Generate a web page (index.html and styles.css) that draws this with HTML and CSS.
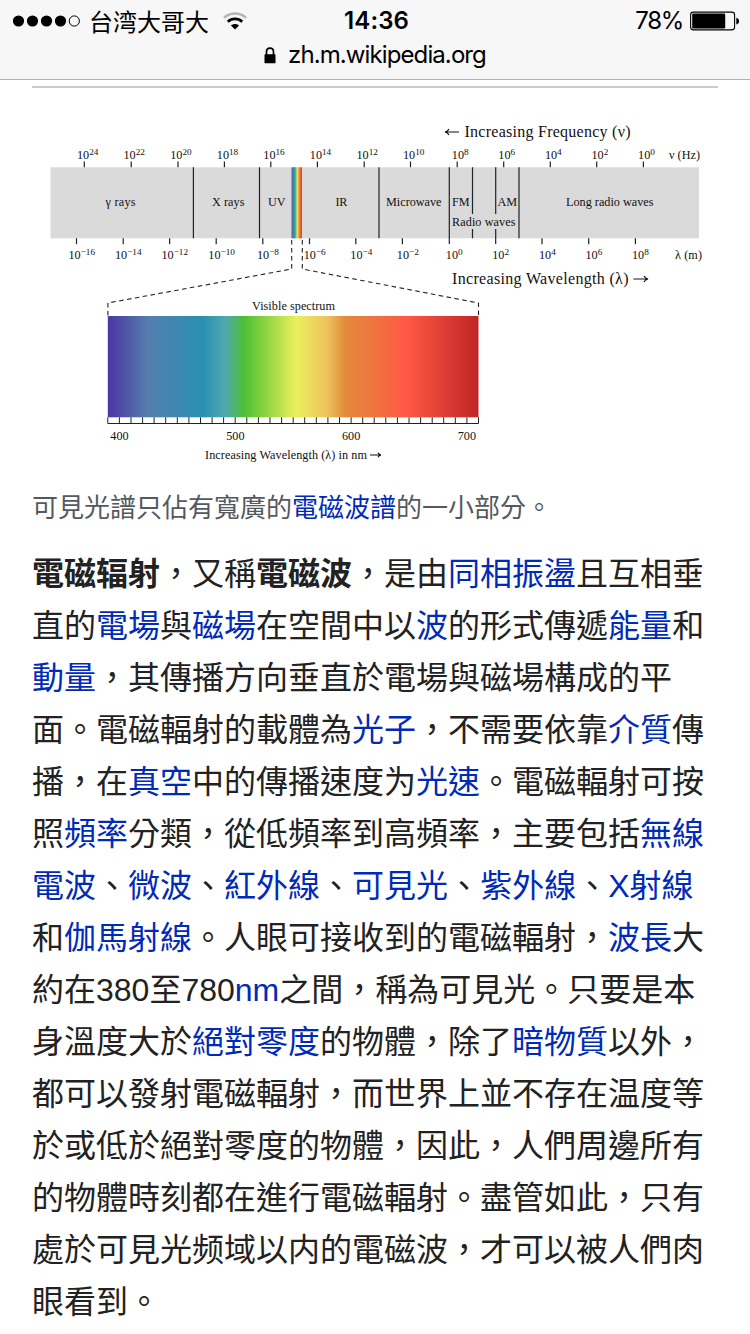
FILE: index.html
```html
<!DOCTYPE html>
<html lang="zh-Hant">
<head>
<meta charset="utf-8">
<title>電磁辐射</title>
<link rel="stylesheet" href="styles.css">
</head>
<body>
<header class="browser-bar">
  <div class="status">
    <div class="status-left">
      <svg class="signal" width="68" height="14" viewBox="0 0 68 14"><circle cx="6.500" cy="7" r="5.600"/><circle cx="20.500" cy="7" r="5.600"/><circle cx="34.500" cy="7" r="5.600"/><circle cx="48.500" cy="7" r="5.600"/><circle cx="62.300" cy="7" r="5.100" fill="none" stroke="#000" stroke-width="1"/></svg>
      <span class="carrier" lang="zh-Hans">台湾大哥大</span>
      <svg class="wifi" width="24" height="18" viewBox="0 0 24 18"><path d="M1 5.800C7 .1 17 .1 23 5.800" fill="none" stroke="#b5b5b5" stroke-width="2.500"/><path d="M4.800 9.800C8.900 6 15.100 6 19.200 9.800" fill="none" stroke="#000" stroke-width="2.800"/><path d="M8 13.500C10.200 11.500 13.800 11.500 16 13.500L12 17.500Z"/></svg>
    </div>
    <div class="clock">14:36</div>
    <div class="status-right">
      <span class="percent">78%</span>
      <svg class="battery" width="50" height="20" viewBox="0 0 50 20"><rect x=".6" y="1.100" width="44" height="17.800" rx="2.800" fill="none" stroke="#000" stroke-width="1.100"/><rect x="2.200" y="2.500" width="33" height="15" rx="1.300"/><path d="M46.300 6.800C50 7.200 50 13 46.300 13.400Z"/></svg>
    </div>
  </div>
  <div class="address">
    <svg width="12" height="17" viewBox="0 0 12 17"><path d="M2.500 8V4.800C2.500-.2 9.500-.2 9.500 4.800V8" fill="none" stroke="#000" stroke-width="1.700"/><rect x=".5" y="7.300" width="11" height="9" rx=".6"/></svg>
    <span>zh.m.wikipedia.org</span>
  </div>
</header>
<main class="article">
  <figure class="figure">
    <svg class="diagram" width="686" height="364" viewBox="32 112 686 364">
      <defs>
        <linearGradient id="visible">
          <stop offset="0" stop-color="#4b35a5"/><stop offset=".11" stop-color="#547fae"/><stop offset=".255" stop-color="#298fb2"/><stop offset=".318" stop-color="#4fa9ad"/><stop offset=".367" stop-color="#4cc033"/><stop offset=".508" stop-color="#eaf05a"/><stop offset=".592" stop-color="#edc35f"/><stop offset=".64" stop-color="#e18b3a"/><stop offset=".805" stop-color="#ff5945"/><stop offset="1" stop-color="#bf2526"/>
        </linearGradient>
        <linearGradient id="band">
          <stop offset="0" stop-color="#5a60b0"/><stop offset=".25" stop-color="#3090b4"/><stop offset=".4" stop-color="#58bd6c"/><stop offset=".55" stop-color="#ece95a"/><stop offset=".72" stop-color="#ee8c40"/><stop offset="1" stop-color="#e33630"/>
        </linearGradient>
      </defs>
      <rect x="50.500" y="167.300" width="648.500" height="71" fill="#dadada"/>
      <rect x="291.500" y="167.300" width="10.500" height="71" fill="url(#band)"/>
      <path class="rule" d="M193.400 167.300V238.300M259.500 167.300V238.300M379 167.300V238.300M449.300 167.300V244M472.500 167.300V214M472.500 229V238.300M495.700 167.300V214M495.700 229V244M519 167.300V238.300"/>
      <path class="rule" d="M84.300 161.500V167.300M131.200 161.500V167.300M178 161.500V167.300M224.400 161.500V167.300M270.800 161.500V167.300M317.400 161.500V167.300M364.200 161.500V167.300M410.500 161.500V167.300M457.200 161.500V167.300M503.700 161.500V167.300M550.300 161.500V167.300M596.700 161.500V167.300M643.400 161.500V167.300"/>
      <path class="rule" d="M76.500 238.300V244.300M123.200 238.300V244.300M169.600 238.300V244.300M216.200 238.300V244.300M262.800 238.300V244.300M309.500 238.300V244.300M355.800 238.300V244.300M402.400 238.300V244.300M542 238.300V244.300M588.700 238.300V244.300M635.400 238.300V244.300"/>
      <g class="label">
        <text x="77" y="159.300">10<tspan class="sup" dy="-4.200">24</tspan></text>
        <text x="123.500" y="159.300">10<tspan class="sup" dy="-4.200">22</tspan></text>
        <text x="170.200" y="159.300">10<tspan class="sup" dy="-4.200">20</tspan></text>
        <text x="216.800" y="159.300">10<tspan class="sup" dy="-4.200">18</tspan></text>
        <text x="263.300" y="159.300">10<tspan class="sup" dy="-4.200">16</tspan></text>
        <text x="309.800" y="159.300">10<tspan class="sup" dy="-4.200">14</tspan></text>
        <text x="356.500" y="159.300">10<tspan class="sup" dy="-4.200">12</tspan></text>
        <text x="403" y="159.300">10<tspan class="sup" dy="-4.200">10</tspan></text>
        <text x="451.800" y="159.300">10<tspan class="sup" dy="-4.200">8</tspan></text>
        <text x="498.300" y="159.300">10<tspan class="sup" dy="-4.200">6</tspan></text>
        <text x="544.900" y="159.300">10<tspan class="sup" dy="-4.200">4</tspan></text>
        <text x="591.500" y="159.300">10<tspan class="sup" dy="-4.200">2</tspan></text>
        <text x="638.100" y="159.300">10<tspan class="sup" dy="-4.200">0</tspan></text>
        <text x="669" y="159.300" textLength="31">ν (Hz)</text>
        <text x="68.500" y="258.700">10<tspan class="sup" dy="-4.200">−16</tspan></text>
        <text x="115" y="258.700">10<tspan class="sup" dy="-4.200">−14</tspan></text>
        <text x="161.500" y="258.700">10<tspan class="sup" dy="-4.200">−12</tspan></text>
        <text x="208.300" y="258.700">10<tspan class="sup" dy="-4.200">−10</tspan></text>
        <text x="257" y="258.700">10<tspan class="sup" dy="-4.200">−8</tspan></text>
        <text x="303.700" y="258.700">10<tspan class="sup" dy="-4.200">−6</tspan></text>
        <text x="350.300" y="258.700">10<tspan class="sup" dy="-4.200">−4</tspan></text>
        <text x="396.800" y="258.700">10<tspan class="sup" dy="-4.200">−2</tspan></text>
        <text x="445.800" y="258.700">10<tspan class="sup" dy="-4.200">0</tspan></text>
        <text x="492.200" y="258.700">10<tspan class="sup" dy="-4.200">2</tspan></text>
        <text x="539" y="258.700">10<tspan class="sup" dy="-4.200">4</tspan></text>
        <text x="585.500" y="258.700">10<tspan class="sup" dy="-4.200">6</tspan></text>
        <text x="632" y="258.700">10<tspan class="sup" dy="-4.200">8</tspan></text>
        <text x="675" y="258.700" textLength="27">λ (m)</text>
        <text x="105.500" y="206.300" textLength="30">γ rays</text>
        <text x="212" y="206.300" textLength="32.500">X rays</text>
        <text x="268" y="206.300" textLength="17.500">UV</text>
        <text x="335.500" y="206.300" textLength="12">IR</text>
        <text x="386" y="206.300" textLength="55.500">Microwave</text>
        <text x="452" y="206.300" textLength="17.500">FM</text>
        <text x="497.500" y="206.300" textLength="19.500">AM</text>
        <text x="452" y="225.600" textLength="63.500">Radio waves</text>
        <text x="566" y="206.300" textLength="87.500">Long radio waves</text>
        <text x="252" y="310.300" textLength="83">Visible spectrum</text>
        <text x="110.300" y="439.500">400</text>
        <text x="226.200" y="439.500">500</text>
        <text x="342" y="439.500">600</text>
        <text x="457.700" y="439.500">700</text>
        <text x="205" y="459" textLength="162">Increasing Wavelength (λ) in nm</text>
      </g>
      <g class="heading">
        <text x="464.500" y="137.300" textLength="166">Increasing Frequency (ν)</text>
        <text x="452" y="284" textLength="176.500">Increasing Wavelength (λ)</text>
      </g>
      <path class="arrow" d="M459 132H445M449 129Q448 131.300 445 132Q448 132.700 449 135M633.500 279H648M644 276Q645 278.300 648 279Q645 279.700 644 282M370 455H381M378 452.800Q378.800 454.500 381 455Q378.800 455.500 378 457.200"/>
      <path class="dash" d="M291.700 240V269L107.900 303V316M302.300 240V269L478.500 303V316"/>
      <rect x="107.800" y="316" width="370.700" height="101.300" fill="url(#visible)"/>
      <path class="ruler" d="M107.800 417.300V423.500H478.500V417.300M119.400 417.300V423.500M131 417.300V423.500M142.600 417.300V423.500M154.100 417.300V423.500M165.700 417.300V423.500M177.300 417.300V423.500M188.900 417.300V423.500M200.500 417.300V423.500M212.100 417.300V423.500M223.600 417.300V423.500M235.200 417.300V423.500M246.800 417.300V423.500M258.400 417.300V423.500M270 417.300V423.500M281.600 417.300V423.500M293.200 417.300V423.500M304.700 417.300V423.500M316.300 417.300V423.500M327.900 417.300V423.500M339.500 417.300V423.500M351.100 417.300V423.500M362.700 417.300V423.500M374.200 417.300V423.500M385.800 417.300V423.500M397.400 417.300V423.500M409 417.300V423.500M420.600 417.300V423.500M432.200 417.300V423.500M443.700 417.300V423.500M455.300 417.300V423.500M466.900 417.300V423.500"/>
    </svg>
    <figcaption class="caption">可見光譜只佔有寬廣的<a>電磁波譜</a>的一小部分。</figcaption>
  </figure>
  <p class="body-text"><b>電磁辐射</b>，又稱<b>電磁波</b>，是由<a>同相振盪</a>且互相垂<br>直的<a>電場</a>與<a>磁場</a>在空間中以<a>波</a>的形式傳遞<a>能量</a>和<br><a>動量</a>，其傳播方向垂直於電場與磁場構成的平<br>面。電磁輻射的載體為<a>光子</a>，不需要依靠<a>介質</a>傳<br>播，在<a>真空</a>中的傳播速度为<a>光速</a>。電磁輻射可按<br>照<a>頻率</a>分類，從低頻率到高頻率，主要包括<a>無線</a><br><a>電波</a>、<a>微波</a>、<a>紅外線</a>、<a>可見光</a>、<a>紫外線</a>、<a>X射線</a><br>和<a>伽馬射線</a>。人眼可接收到的電磁輻射，<a>波長</a>大<br>約在380至780<a>nm</a>之間，稱為可見光。只要是本<br>身溫度大於<a>絕對零度</a>的物體，除了<a>暗物質</a>以外，<br>都可以發射電磁輻射，而世界上並不存在温度等<br>於或低於絕對零度的物體，因此，人們周邊所有<br>的物體時刻都在進行電磁輻射。盡管如此，只有<br>處於可見光频域以内的電磁波，才可以被人們肉<br>眼看到。</p>
</main>
</body>
</html>
```
FILE: styles.css
```css
* { box-sizing: border-box; }
body {
  margin: 0;
  width: 750px;
  height: 1334px;
  overflow: hidden;
  background: #fff;
  color: #222;
  font-family: "Liberation Sans", "Noto Sans CJK TC", sans-serif;
}
svg { display: block; flex: none; }
.browser-bar {
  height: 80px;
  background: #f7f7f7;
  border-bottom: 1px solid #b2b2b2;
  color: #000;
  font-family: Inter, "Noto Sans CJK SC", sans-serif;
}
.status {
  display: grid;
  grid-template-columns: 1fr auto 1fr;
  align-items: center;
  height: 40px;
  padding: 0 10px 0 12px;
  line-height: 40px;
}
.status-left, .status-right { display: flex; align-items: center; }
.status-right { justify-content: flex-end; gap: 7px; }
.carrier {
  margin: 0 14px 0 9px;
  font-family: "Noto Sans CJK SC", sans-serif;
  font-size: 24px;
}
.clock { padding-left: 1px; font-size: 24px; font-weight: 600; letter-spacing: .1px; line-height: 42px; }
.percent { font-size: 24px; letter-spacing: -1.3px; line-height: 42px; }
.address {
  display: flex;
  align-items: center;
  justify-content: center;
  gap: 12px;
  height: 30px;
  font-size: 24px;
  letter-spacing: -.9px;
  line-height: 30px;
}
.article { margin: 6px 32px 0; border-top: 2px solid #c8ccd1; }
.figure { margin: 24px 0 0; }
.caption {
  height: 46px;
  margin-top: 9px;
  color: #54595d;
  font-size: 26px;
  line-height: 46px;
  white-space: nowrap;
}
.body-text {
  margin: 17px 0 0;
  font-size: 32px;
  line-height: 52px;
  white-space: nowrap;
}
a { color: #002bb8; }
.label, .heading { fill: #111; font-family: "Liberation Serif", serif; }
.label { font-size: 12.2px; }
.heading { font-size: 16px; }
.sup { font-size: 9.2px; }
.rule, .ruler { fill: none; stroke: #222; stroke-width: 1.2; }
.ruler { stroke-width: 1; }
.arrow { fill: none; stroke: #111; stroke-width: 1.2; }
.dash { fill: none; stroke: #222; stroke-width: 1.1; stroke-dasharray: 4.5 3.5; }
```
